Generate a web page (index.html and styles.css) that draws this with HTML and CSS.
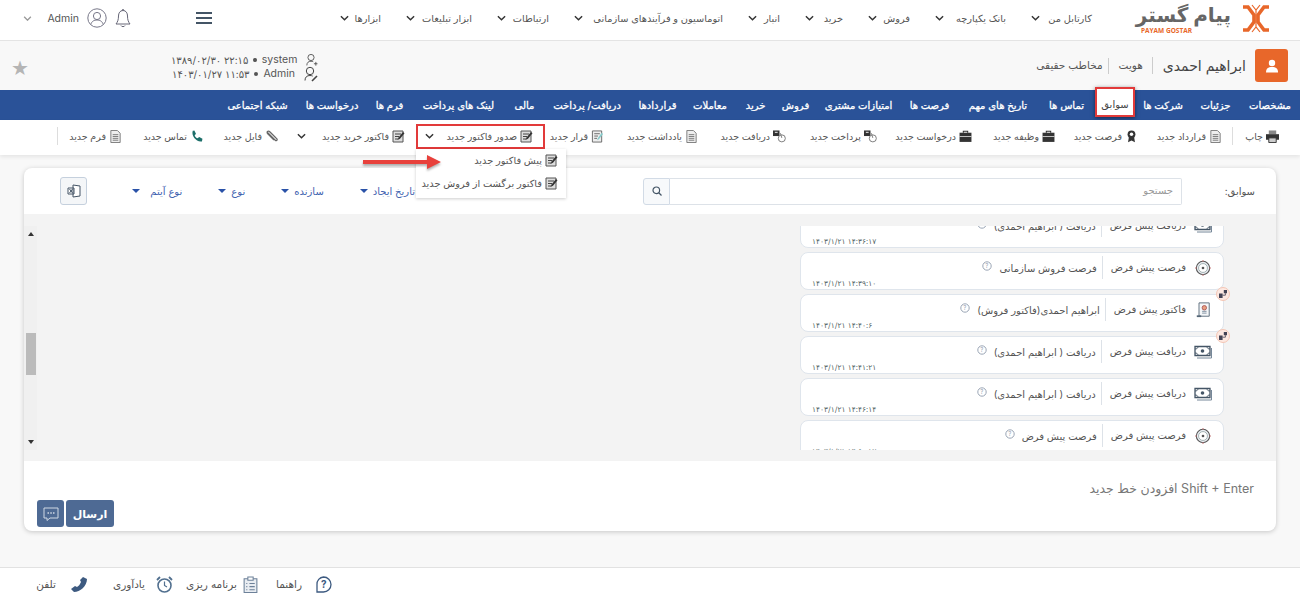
FILE: index.html
```html
<!DOCTYPE html>
<html lang="fa" dir="rtl">

<head>
    <meta charset="UTF-8">
    <title>ابراهیم احمدی</title>
    <link rel="stylesheet" href="styles.css">
</head>

<body>
    <svg class="defs" width="0" height="0">
        <symbol id="i-chev" viewBox="0 0 10 6"><path d="M1 1l4 4 4-4" fill="none" stroke="currentColor" stroke-width="1.6"/></symbol>
        <symbol id="i-doc" viewBox="0 0 12 14"><path d="M1 .5h7l3 3v10H1z" fill="#eee" stroke="#777"/><path d="M3 5h6M3 7h6M3 9h6M3 11h6" stroke="#777"/></symbol>
        <symbol id="i-edit" viewBox="0 0 13 13"><path d="M1 1h10v11H1z" fill="#ddd" stroke="#555"/><path d="M3 4h6M3 6.500h4M3 9h3" stroke="#444"/><path d="M5.500 10l1-2.500L11 2l1.500 1.200L8 8.800z" fill="#333"/></symbol>
        <symbol id="i-note" viewBox="0 0 13 14"><path d="M1 1h10v12H1z" fill="#eee" stroke="#666"/><path d="M3 4h6M3 6.500h4M3 9h3" stroke="#666"/><path d="M6 11l1-2.500L11 3l1.500 1.200L8 10z" fill="#8cc"/></symbol>
        <symbol id="i-brief" viewBox="0 0 12 11"><path d="M4 2V.7h4V2" fill="none" stroke="#333"/><path d="M.5 2h11v8.500H.5z" fill="#333"/><path d="M.5 5.500h11" stroke="#eee" stroke-width=".7"/></symbol>
        <symbol id="i-pay" viewBox="0 0 14 13"><path d="M0 0h7v6H0z" fill="#333"/><path d="M2 2h3" stroke="#fff"/><circle cx="9.500" cy="8.500" r="3.800" fill="#fff" stroke="#777"/><path d="M8 3l1.500 5" stroke="#777"/></symbol>
        <symbol id="i-target" viewBox="0 0 18 18"><circle cx="9" cy="9" r="7.500" fill="#e9edf2" stroke="#555" stroke-width="1.200"/><circle cx="9" cy="9" r="5" fill="#fff" stroke="#9aa"/><circle cx="9" cy="9" r="1.500" fill="#555"/><path d="M9 0v2M9 16v2M0 9h2M16 9h2" stroke="#c77" stroke-width="1"/></symbol>
        <symbol id="i-money" viewBox="0 0 18 14"><path d="M1 1.500h15v9H1z" fill="#fff" stroke="#456" stroke-width="1.300"/><circle cx="8.500" cy="6" r="1.800" fill="#456"/><path d="M1 4c2 0 3-1 3-2.500M16 4c-2 0-3-1-3-2.500M1 8c2 0 3 1 3 2.500M16 8c-2 0-3 1-3 2.500" fill="none" stroke="#456"/><path d="M17.500 3v10H3" fill="none" stroke="#789"/></symbol>
        <symbol id="i-inv" viewBox="0 0 16 18"><path d="M3.500 1h11.500v15H3.500z" fill="#f4f6f8" stroke="#567"/><circle cx="9.500" cy="6.500" r="2.500" fill="#e8a080" stroke="#a55"/><path d="M7 10.500h5M7 12.500h5" stroke="#789"/><path d="M1 15h5v2H1z" fill="#567"/></symbol>
        <symbol id="i-q" viewBox="0 0 10 10"><circle cx="5" cy="5" r="4.200" fill="none" stroke="#9aa5b5"/><text x="3.200" y="7.300" class="q-small">?</text></symbol>
        <symbol id="i-link" viewBox="0 0 10 10"><path d="M0 4.500h4.500V10H0zM6 0h4v4H6z" fill="#445"/><path d="M4.500 6.500H8V4" fill="none" stroke="#445"/></symbol>
        <symbol id="i-person-add" viewBox="0 0 14 16"><circle cx="6" cy="5" r="3.700" fill="none" stroke="#444"/><path d="M1 14.500c0-3.500 2-5 5-5 1 0 2 .2 2.700.6" fill="none" stroke="#444"/><path d="M9.500 12.500h4.500M11.800 10.300v4.500" stroke="#444"/></symbol>
        <symbol id="i-person-edit" viewBox="0 0 14 16"><circle cx="6" cy="5" r="3.700" fill="none" stroke="#444"/><path d="M1 14.500c0-3.500 2-5 5-5 1 0 2 .2 2.700.6" fill="none" stroke="#444"/><path d="M8 15l5-5" stroke="#444" stroke-width="1.600"/></symbol>
    </svg>

    <header class="topbar">
        <div class="logo">
            <svg class="logo-icon" viewBox="0 0 28 29" width="28" height="29">
                <path d="M1 3h5l6 8v7l-6 8H1M27 3h-5l-6 8v7l6 8h5" fill="none" stroke="#e8672a" stroke-width="3.600"/>
                <path d="M10 1l4 5 4-5M10 28l4-5 4 5M14 6v17" fill="none" stroke="#e8672a" stroke-width="1.200"/>
            </svg>
            <div class="logo-word">
                <span class="logo-fa">پیام گستر</span>
                <span class="logo-en">PAYAM GOSTAR</span>
            </div>
        </div>
        <nav class="mainmenu">
            <a>کارتابل من <svg><use href="#i-chev"/></svg></a>
            <a>بانک یکپارچه <svg><use href="#i-chev"/></svg></a>
            <a>فروش <svg><use href="#i-chev"/></svg></a>
            <a>خرید <svg><use href="#i-chev"/></svg></a>
            <a>انبار <svg><use href="#i-chev"/></svg></a>
            <a>اتوماسیون و فرآیندهای سازمانی <svg><use href="#i-chev"/></svg></a>
            <a>ارتباطات <svg><use href="#i-chev"/></svg></a>
            <a>ابزار تبلیغات <svg><use href="#i-chev"/></svg></a>
            <a>ابزارها <svg><use href="#i-chev"/></svg></a>
        </nav>
        <div class="hamburger"><i></i><i></i><i></i></div>
        <div class="account">
            <svg class="bell" viewBox="0 0 16 19" width="16" height="19"><path d="M8 1.500c-3 0-4.500 2.500-4.500 5.500 0 4-1 6-2.500 8h14c-1.500-2-2.500-4-2.500-8 0-3-1.500-5.500-4.500-5.500z" fill="none" stroke="#667"/><path d="M6 16.500c.5 1.500 3.500 1.500 4 0M7 1.500l.5-1h1l.5 1" fill="none" stroke="#667"/></svg>
            <svg class="avatar" viewBox="0 0 20 20" width="20" height="20"><circle cx="10" cy="10" r="9.200" fill="none" stroke="#778"/><circle cx="10" cy="8" r="3.600" fill="none" stroke="#778"/><path d="M3.800 16.500c1-3.500 3.500-4.500 6.200-4.500s5.200 1 6.200 4.500" fill="none" stroke="#778"/></svg>
            <span class="account-name">Admin</span>
            <svg class="account-chev"><use href="#i-chev"/></svg>
        </div>
    </header>

    <section class="entity">
        <div class="entity-pic">
            <svg viewBox="0 0 14 14" width="14" height="14"><circle cx="7" cy="4" r="3.200" fill="#fff"/><path d="M1 13.500c0-4 2-5.500 6-5.500s6 1.500 6 5.500z" fill="#fff"/></svg>
        </div>
        <h1 class="entity-name">ابراهیم احمدی</h1>
        <span class="entity-attr">هویت</span>
        <span class="entity-attr">مخاطب حقیقی</span>
        <div class="entity-log">
            <div class="log-line">
                <svg><use href="#i-person-add"/></svg>
                <span class="log-user">system</span>
                <span class="log-dot"></span>
                <span class="log-date">۱۳۸۹/۰۲/۳۰ ۲۲:۱۵</span>
            </div>
            <div class="log-line">
                <svg><use href="#i-person-edit"/></svg>
                <span class="log-user">Admin</span>
                <span class="log-dot"></span>
                <span class="log-date">۱۴۰۳/۰۱/۲۷ ۱۱:۵۳</span>
            </div>
        </div>
        <span class="star">★</span>
    </section>

    <nav class="tabs">
        <a>مشخصات</a>
        <a>جزئیات</a>
        <a>شرکت ها</a>
        <a class="active">سوابق</a>
        <a>تماس ها</a>
        <a>تاریخ های مهم</a>
        <a>فرصت ها</a>
        <a>امتیازات مشتری</a>
        <a>فروش</a>
        <a>خرید</a>
        <a>معاملات</a>
        <a>قراردادها</a>
        <a>دریافت/ پرداخت</a>
        <a>مالی</a>
        <a>لینک های پرداخت</a>
        <a>فرم ها</a>
        <a>درخواست ها</a>
        <a>شبکه اجتماعی</a>
    </nav>

    <div class="toolbar">
        <a class="tool tool-print"><svg viewBox="0 0 14 13"><path d="M3 0h8v4H3z" fill="#888"/><path d="M0 4h14v6H0z" fill="#333"/><path d="M3 8h8v5H3z" fill="#ccc" stroke="#333"/></svg>چاپ</a>
        <a class="tool"><svg><use href="#i-doc"/></svg>قرارداد جدید</a>
        <a class="tool"><svg viewBox="0 0 12 15"><circle cx="6" cy="5" r="4.500" fill="#333"/><circle cx="6" cy="5" r="2" fill="#fff"/><path d="M3 8l-1 6 4-2 4 2-1-6" fill="#333"/></svg>فرصت جدید</a>
        <a class="tool"><svg><use href="#i-brief"/></svg>وظیفه جدید</a>
        <a class="tool"><svg><use href="#i-brief"/></svg>درخواست جدید</a>
        <a class="tool"><svg><use href="#i-pay"/></svg>پرداخت جدید</a>
        <a class="tool"><svg><use href="#i-pay"/></svg>دریافت جدید</a>
        <a class="tool"><svg><use href="#i-doc"/></svg>یادداشت جدید</a>
        <a class="tool"><svg><use href="#i-note"/></svg>قرار جدید</a>
        <div class="tool-drop">
            <a class="tool tool-marked"><svg><use href="#i-edit"/></svg>صدور فاکتور جدید <svg class="chev"><use href="#i-chev"/></svg></a>
            <div class="dropmenu">
                <a><svg><use href="#i-edit"/></svg>پیش فاکتور جدید</a>
                <a><svg><use href="#i-edit"/></svg>فاکتور برگشت از فروش جدید</a>
            </div>
        </div>
        <a class="tool tool-buy"><svg><use href="#i-edit"/></svg>فاکتور خرید جدید <svg class="chev"><use href="#i-chev"/></svg></a>
        <a class="tool"><svg viewBox="0 0 13 13"><path d="M2 2l8 8c2 2 3-1 1-2L5 2C3 0 1 2 3 4l6 6" fill="none" stroke="#666" stroke-width="1.300"/></svg>فایل جدید</a>
        <a class="tool"><svg viewBox="0 0 12 12"><path d="M2 1l2-.5 1.500 3L4.300 5c.5 1.200 1.500 2.200 2.700 2.700l1.500-1.200 3 1.500-.5 2.500c-5 1-10-5-8.500-9.500z" fill="#1d6f6a"/></svg>تماس جدید</a>
        <a class="tool tool-last"><svg><use href="#i-doc"/></svg>فرم جدید</a>
    </div>

    <svg class="red-arrow" viewBox="0 0 80 14" width="80" height="14"><path d="M0 5h64V0l14 7-14 7V9H0z" fill="#e8413c"/></svg>

    <main class="card">
        <div class="card-head">
            <label class="search-label">سوابق:</label>
            <div class="search"><span class="search-input">جستجو</span><span class="search-btn"><svg viewBox="0 0 10 10" width="10" height="10"><circle cx="4.300" cy="4.300" r="3.300" fill="none" stroke="#456" stroke-width="1.200"/><path d="M7 7l2.500 2.500" stroke="#456" stroke-width="1.200"/></svg></span></div>
            <div class="filters">
                <a>تاریخ ایجاد <i></i></a>
                <a>سازنده <i></i></a>
                <a>نوع <i></i></a>
                <a>نوع آیتم <i></i></a>
            </div>
            <span class="excel"><svg viewBox="0 0 14 14" width="14" height="14"><path d="M6 1l7 1v10l-7 1z M1 4h6v6H1z" fill="#fff" stroke="#456"/><path d="M2.500 5l3 4M5.500 5l-3 4" stroke="#456"/></svg></span>
        </div>
        <div class="history">
            <div class="feed">
                <div class="feed-list">
                    <article class="item">
                        <div class="item-top"><svg class="item-icon"><use href="#i-money"/></svg><span class="item-type">دریافت پیش فرض</span><span class="item-title">دریافت ( ابراهیم احمدی)</span><svg class="item-q"><use href="#i-q"/></svg></div>
                        <time>۱۴۰۳/۱/۲۱ ۱۴:۳۶:۱۷</time>
                    </article>
                    <article class="item">
                        <div class="item-top"><svg class="item-icon"><use href="#i-target"/></svg><span class="item-type">فرصت پیش فرض</span><span class="item-title">فرصت فروش سازمانی</span><svg class="item-q"><use href="#i-q"/></svg></div>
                        <time>۱۴۰۳/۱/۲۱ ۱۴:۳۹:۱۰</time>
                    </article>
                    <article class="item">
                        <span class="item-badge"><svg><use href="#i-link"/></svg></span>
                        <div class="item-top"><svg class="item-icon"><use href="#i-inv"/></svg><span class="item-type">فاکتور پیش فرض</span><span class="item-title">ابراهیم احمدی(فاکتور فروش)</span><svg class="item-q"><use href="#i-q"/></svg></div>
                        <time>۱۴۰۳/۱/۲۱ ۱۴:۴۰:۶</time>
                    </article>
                    <article class="item">
                        <span class="item-badge"><svg><use href="#i-link"/></svg></span>
                        <div class="item-top"><svg class="item-icon"><use href="#i-money"/></svg><span class="item-type">دریافت پیش فرض</span><span class="item-title">دریافت ( ابراهیم احمدی)</span><svg class="item-q"><use href="#i-q"/></svg></div>
                        <time>۱۴۰۳/۱/۲۱ ۱۴:۴۱:۲۱</time>
                    </article>
                    <article class="item">
                        <div class="item-top"><svg class="item-icon"><use href="#i-money"/></svg><span class="item-type">دریافت پیش فرض</span><span class="item-title">دریافت ( ابراهیم احمدی)</span><svg class="item-q"><use href="#i-q"/></svg></div>
                        <time>۱۴۰۳/۱/۲۱ ۱۴:۴۶:۱۴</time>
                    </article>
                    <article class="item">
                        <div class="item-top"><svg class="item-icon"><use href="#i-target"/></svg><span class="item-type">فرصت پیش فرض</span><span class="item-title">فرصت پیش فرض</span><svg class="item-q"><use href="#i-q"/></svg></div>
                        <time>۱۴۰۳/۱/۲۱ ۱۴:۵۰:۱۲</time>
                    </article>
                </div>
            </div>
            <div class="scroll">
                <span class="scroll-up"></span>
                <span class="scroll-thumb"></span>
                <span class="scroll-down"></span>
            </div>
        </div>
        <div class="compose">
            <div class="compose-hint">Shift + Enter افزودن خط جدید</div>
            <div class="compose-btns">
                <button class="send">ارسال</button>
                <button class="chat"><svg viewBox="0 0 16 14" width="16" height="14"><path d="M1 1h14v10H7l-3 2.500V11H1z" fill="none" stroke="#cfd8e4"/><path d="M4.500 6h1.500M7.300 6h1.500M10 6h1.500" stroke="#cfd8e4" stroke-width="1.300"/></svg></button>
            </div>
        </div>
    </main>

    <footer class="footer">
        <a><svg viewBox="0 0 17 17" width="17" height="17"><path d="M8.500 1a7.500 7.500 0 0 1 0 15H2V8.500A7 7 0 0 1 8.500 1z" fill="none" stroke="#3d5a80" stroke-width="1.300"/><text x="6" y="12" class="q-mark">?</text></svg>راهنما</a>
        <a><svg viewBox="0 0 14 16" width="15" height="17"><path d="M1 2.500h12v13H1z" fill="#e9edf2" stroke="#6d8199"/><path d="M4.500 1h5v3h-5z" fill="#fff" stroke="#6d8199"/><path d="M3 7h1M6 7h5M3 10h1M6 10h5M3 13h1M6 13h5" stroke="#6d8199"/></svg>برنامه ریزی</a>
        <a><svg viewBox="0 0 17 17" width="17" height="17"><circle cx="8.500" cy="9.500" r="6.500" fill="none" stroke="#52708f" stroke-width="1.600"/><path d="M8.500 5.500v4l2.500 1.500" fill="none" stroke="#52708f" stroke-width="1.200"/><path d="M1 4l3-3M16 4l-3-3" stroke="#52708f" stroke-width="1.800"/></svg>یادآوری</a>
        <a><svg viewBox="0 0 18 17" width="18" height="17"><path d="M13 1l4 2c0 7-7 13-13 13l-3-3 4-3 2 1c2-1 3-3 4-5l-1-2z" fill="#3d5a80"/></svg>تلفن</a>
    </footer>
</body>

</html>
```

FILE: styles.css
```css
* {
    box-sizing: border-box;
}

html,
body {
    margin: 0;
    height: 600px;
    overflow: hidden;
}

body {
    position: relative;
    font-family: "Inter", "DejaVu Sans", sans-serif;
    font-size: 10px;
    color: #555;
    background-color: #f8f8f8;
}

a {
    display: flex;
    align-items: center;
    white-space: nowrap;
}

.defs {
    position: absolute;
}

/* top bar */
.topbar {
    height: 41px;
    display: flex;
    align-items: center;
    background-color: #fff;
    border-bottom: 1px solid #e4e4e4;
    padding: 0 30px 4px 0;
}

.logo {
    display: flex;
    align-items: flex-start;
    gap: 11px;
    width: 135px;
    flex: none;
    margin-top: 3px;
}

.logo-icon {
    flex: none;
}

.logo-word {
    width: 97px;
    display: flex;
    flex-direction: column;
    line-height: 1;
}

.logo-fa {
    font-size: 20px;
    font-weight: bold;
    color: #666;
    height: 24px;
    line-height: 22px;
    white-space: nowrap;
}

.logo-en {
    font-family: "Open Sans", sans-serif;
    font-size: 6.500px;
    font-weight: bold;
    color: #e8672a;
    direction: ltr;
    text-align: left;
    padding-left: 6px;
    white-space: nowrap;
}

.mainmenu {
    display: flex;
    margin-right: 43px;
    font-size: 9.800px;
}

.mainmenu a {
    justify-content: space-between;
    padding-left: 25px;
}

.mainmenu a:nth-child(1) { width: 86px; }
.mainmenu a:nth-child(2) { width: 96px; }
.mainmenu a:nth-child(3) { width: 67px; }
.mainmenu a:nth-child(4) { width: 63px; }
.mainmenu a:nth-child(5) { width: 57px; }
.mainmenu a:nth-child(6) { width: 174px; }
.mainmenu a:nth-child(7) { width: 77px; }
.mainmenu a:nth-child(8) { width: 91px; }
.mainmenu a:nth-child(9) { width: 41px; padding-left: 0; }

.mainmenu svg {
    width: 9px;
    height: 6px;
    color: #333;
}

.hamburger {
    margin-right: 128px;
    width: 16px;
    display: flex;
    flex-direction: column;
    gap: 3px;
}

.hamburger i {
    height: 2px;
    background-color: #445566;
}

.account {
    display: flex;
    align-items: center;
    gap: 8px;
    margin-right: 65px;
    font-size: 10.500px;
}

.account-chev {
    width: 9px;
    height: 5px;
    margin-right: 7px;
    color: #999;
}

/* entity header */
.entity {
    height: 49px;
    display: flex;
    align-items: center;
    padding: 0 12px 0 10px;
}

.entity-pic {
    width: 33px;
    height: 33px;
    background-color: #e8672a;
    border-radius: 3px;
    display: flex;
    align-items: center;
    justify-content: center;
    margin-left: 9px;
}

.entity-name {
    font-size: 14px;
    font-weight: normal;
    color: #444;
    margin: 0 0 0 9px;
    padding-left: 10px;
    border-left: 1px solid #ccc;
}

.entity-attr {
    font-size: 10.500px;
    padding-left: 10px;
    margin-left: 5px;
    border-left: 1px solid #ccc;
    line-height: 16px;
}

.entity-attr + .entity-attr {
    border-left: 0;
}

.entity-log {
    margin: 3px auto 0 0;
    width: 147px;
    font-size: 10.500px;
    line-height: 14px;
}

.log-line {
    display: flex;
    align-items: center;
    gap: 5px;
}

.log-line svg {
    width: 14px;
    height: 16px;
    margin: -1px 0 -1px 4px;
}

.log-dot {
    width: 4px;
    height: 4px;
    border-radius: 50%;
    background-color: #555;
}

.log-date {
    direction: ltr;
    font-size: 10px;
    white-space: nowrap;
}

.star {
    font-size: 20px;
    line-height: 20px;
    color: #b5b5b5;
    margin: 5px 141px 0 0;
    font-family: "DejaVu Sans", sans-serif;
    width: 20px;
    text-align: center;
}

/* blue tabs */
.tabs {
    height: 30px;
    display: flex;
    align-items: center;
    background-color: #2a5298;
    color: #fff;
    font-size: 10px;
    -webkit-text-stroke: .3px #fff;
}

.tabs a {
    justify-content: center;
}

.tabs a:nth-child(1) { width: 60px; }
.tabs a:nth-child(2) { width: 49px; }
.tabs a:nth-child(3) { width: 56px; }
.tabs a:nth-child(4) { width: 40px; }
.tabs a:nth-child(5) { width: 57px; }
.tabs a:nth-child(6) { width: 80px; }
.tabs a:nth-child(7) { width: 57px; }
.tabs a:nth-child(8) { width: 85px; }
.tabs a:nth-child(9) { width: 41px; }
.tabs a:nth-child(10) { width: 39px; }
.tabs a:nth-child(11) { width: 52px; }
.tabs a:nth-child(12) { width: 53px; }
.tabs a:nth-child(13) { width: 88px; }
.tabs a:nth-child(14) { width: 37px; }
.tabs a:nth-child(15) { width: 95px; }
.tabs a:nth-child(16) { width: 43px; }
.tabs a:nth-child(17) { width: 72px; }
.tabs a:nth-child(18) { width: 77px; }

.tabs .active {
    height: 30px;
    align-self: flex-start;
    margin-top: -3px;
    padding-top: 4px;
    color: #444;
    -webkit-text-stroke: 0;
    background-color: #fff;
    border: 2px solid #e23a3a;
    box-shadow: 0 1px 4px rgba(0, 0, 0, .5);
}

/* toolbar */
.toolbar {
    height: 35px;
    display: flex;
    align-items: center;
    padding: 0 21px 3px 0;
    background-color: #fff;
    box-shadow: 0 2px 4px rgba(0, 0, 0, .08);
    font-size: 9.500px;
    position: relative;
}

.tool {
    gap: 3px;
    height: 18px;
}

.toolbar > .tool:nth-child(2) { width: 84px; }
.toolbar > .tool:nth-child(3) { width: 83px; }
.toolbar > .tool:nth-child(4) { width: 83px; }
.toolbar > .tool:nth-child(5) { width: 95px; }
.toolbar > .tool:nth-child(6) { width: 91px; }
.toolbar > .tool:nth-child(7) { width: 88px; }
.toolbar > .tool:nth-child(8) { width: 94px; }
.toolbar > .tool:nth-child(9) { width: 59px; }
.toolbar > .tool:nth-child(12) { width: 75px; }
.toolbar > .tool:nth-child(13) { width: 81px; }

.tool svg {
    width: 13px;
    height: 13px;
    flex: none;
}

.tool .chev {
    width: 9px;
    height: 6px;
    margin-right: auto;
    color: #333;
}

.tool-print {
    width: 47px;
    margin-left: 10px;
    border-left: 1px solid #ddd;
}

.tool-last {
    width: 65px;
    border-left: 1px solid #ddd;
}

.tool-buy {
    width: 127px;
    margin-right: 11px;
    padding-left: 19px;
}

.tool-drop {
    position: relative;
}

.tool-marked {
    width: 129px;
    height: 25px;
    border: 2px solid #e23a3a;
    padding: 0 10px 0 7px;
}

.dropmenu {
    position: absolute;
    top: 25px;
    left: 0;
    width: 150px;
    height: 49px;
    background-color: #fff;
    box-shadow: 0 1px 3px rgba(0, 0, 0, .2);
    padding-right: 8px;
    font-size: 9.800px;
    z-index: 3;
}

.dropmenu a {
    height: 23px;
    gap: 3px;
}

.dropmenu svg {
    width: 13px;
    height: 13px;
}

.red-arrow {
    position: absolute;
    left: 363px;
    top: 155px;
    z-index: 4;
    filter: drop-shadow(0 2px 1px rgba(0, 0, 0, .3));
}

/* main card */
.card {
    margin: 13px 24px 0;
    height: 363px;
    background-color: #fff;
    border-radius: 8px;
    box-shadow: 0 1px 5px rgba(0, 0, 0, .2);
    overflow: hidden;
    display: flex;
    flex-direction: column;
}

.card-head {
    height: 46px;
    display: flex;
    align-items: center;
    padding-right: 21px;
}

.search-label {
    font-size: 10px;
    width: 73px;
}

.search {
    display: flex;
    width: 539px;
    height: 27px;
}

.search-input {
    flex: 1;
    border: 1px solid #dde2e8;
    padding: 5px 8px;
    color: #999;
    font-size: 10px;
    border-radius: 0 2px 2px 0;
    border-left: 0;
}

.search-btn {
    width: 27px;
    border: 1px solid #d2dbe6;
    background-color: #f7f9fb;
    border-radius: 3px 0 0 3px;
    display: flex;
    align-items: center;
    justify-content: center;
}

.filters {
    display: flex;
    gap: 36px;
    margin-right: 228px;
    color: #3f63b0;
    font-size: 10px;
}

.filters a {
    gap: 5px;
}

.filters a:last-child {
    width: 50px;
    justify-content: space-between;
}

.filters i {
    border-top: 4px solid #2a52a8;
    border-inline: 4px solid transparent;
}

.excel {
    margin-right: 45px;
    width: 27px;
    height: 28px;
    background-color: #f4f6f8;
    border: 1px solid #c5d0dd;
    border-radius: 3px;
    display: flex;
    align-items: center;
    justify-content: center;
}

.history {
    height: 247px;
    background-color: #f3f3f3;
    display: flex;
    padding: 12px 0 11px;
}

.feed {
    width: 432px;
    margin-right: 44px;
    overflow: hidden;
    padding-right: 8px;
}

.feed-list {
    display: flex;
    flex-direction: column;
    gap: 4px;
    margin-top: -16px;
}

.item {
    position: relative;
    flex: none;
    width: 424px;
    height: 38px;
    background-color: #fff;
    border: 1px solid #dfe5ec;
    border-radius: 8px;
    padding: 3px 11px 0 8px;
}

.item-top {
    display: flex;
    align-items: center;
    height: 23px;
    font-size: 10px;
}

.item-icon {
    width: 18px;
    height: 16px;
    flex: none;
    margin-left: 8px;
}

.item-type {
    padding-left: 8px;
    margin-left: 5px;
    border-left: 1px solid #dde2e8;
    line-height: 23px;
}

.item-q {
    width: 10px;
    height: 10px;
    margin-right: 7px;
    margin-top: -3px;
}

.q-small {
    direction: ltr;
    font-size: 6px;
    fill: #9aa5b5;
}

.item time {
    display: block;
    direction: ltr;
    text-align: left;
    font-size: 7.500px;
    line-height: 9px;
    color: #566;
    padding-left: 3px;
}

.item-badge {
    position: absolute;
    top: -8px;
    right: -7px;
    width: 14px;
    height: 14px;
    border-radius: 50%;
    background-color: #fde9e2;
    border: 1px solid #f4c6b5;
    display: flex;
    align-items: center;
    justify-content: center;
}

.item-badge svg {
    width: 8px;
    height: 8px;
}

.scroll {
    margin: 0 auto 0 0;
    width: 13px;
    position: relative;
    background-color: #f0f0f0;
    display: flex;
    flex-direction: column;
    align-items: center;
    justify-content: space-between;
}

.scroll-up {
    border-bottom: 4px solid #333;
    border-inline: 3px solid transparent;
    margin-top: 6px;
}

.scroll-down {
    border-top: 4px solid #333;
    border-inline: 3px solid transparent;
    margin-bottom: 6px;
}

.scroll-thumb {
    position: absolute;
    top: 107px;
    width: 10px;
    height: 42px;
    background-color: #bbb;
}

.compose {
    flex: 1;
    padding: 20px 22px 0 13px;
    display: flex;
    flex-direction: column;
}

.compose-hint {
    color: #777;
    font-size: 12.500px;
}

.compose-btns {
    margin-top: auto;
    margin-bottom: 4px;
    display: flex;
    justify-content: flex-end;
    gap: 2px;
}

.compose-btns button {
    height: 27px;
    border: 0;
    border-radius: 3px;
    background-color: #4e6a94;
    color: #fff;
    font-family: inherit;
}

.send {
    width: 48px;
    font-size: 11px;
    font-weight: bold;
}

.compose-btns .chat {
    width: 27px;
    padding: 0;
    display: flex;
    align-items: center;
    justify-content: center;
}

/* footer */
.footer {
    position: absolute;
    left: 0;
    right: 0;
    bottom: 0;
    height: 33px;
    background-color: #fff;
    border-top: 1px solid #e2e2e2;
    display: flex;
    justify-content: flex-end;
    align-items: center;
    padding-left: 35px;
    font-size: 10.500px;
}

.footer a:nth-child(1) { width: 74px; gap: 13px; }
.footer a:nth-child(2) { width: 85px; gap: 6px; }
.footer a:nth-child(3) { width: 85px; gap: 11px; }
.footer a:nth-child(4) { width: 53px; gap: 14px; }

.q-mark {
    direction: ltr;
    font-size: 10px;
    font-weight: bold;
    fill: #3d5a80;
}
```
